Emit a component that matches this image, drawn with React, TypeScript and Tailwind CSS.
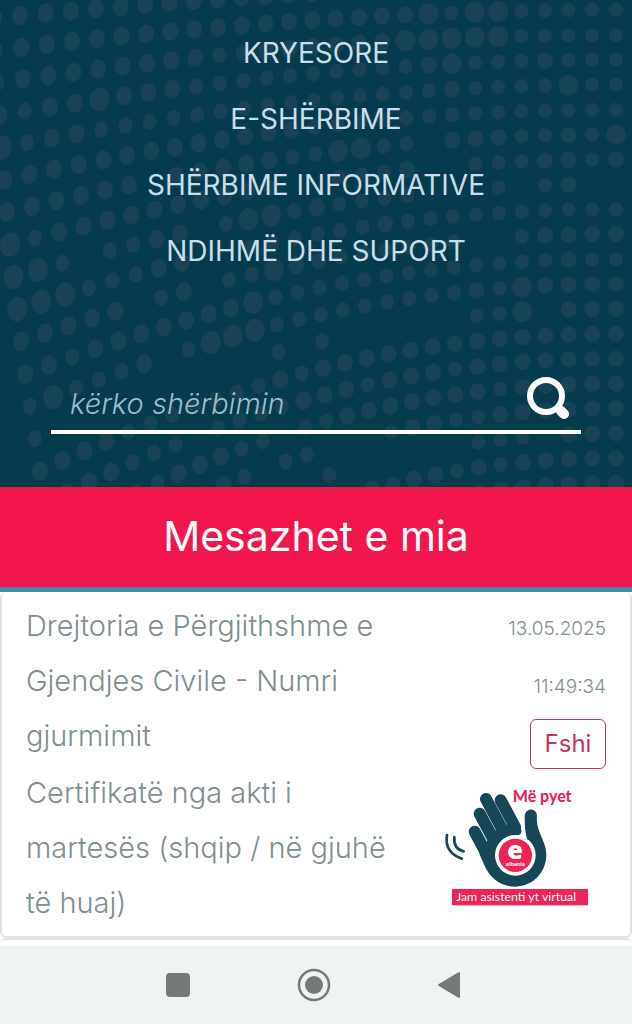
const navItems = ["KRYESORE", "E-SHËRBIME", "SHËRBIME INFORMATIVE", "NDIHMË DHE SUPORT"];

// One string per dot row, one digit per column: 0 = no dot, 1-3 = dot size
const dotRows = [
  "222222222222222222222222222",
  "122222222222222222313311111",
  "122222222112222223333311111",
  "212232221111111111231112111",
  "312211111111111111121111311",
  "222222222222211111111111111",
  "222222022222113311022211213",
  "312222222221001112001112212",
  "331011220133121111000101200",
  "333111220011111121111111111",
  "222220120113211111110012222",
  "221222222231111111111111211",
  "131112013331111111112132222",
  "100000000001010000001130222",
  "222211111112122222222222222",
  "222211101111222122212222222",
  "110111222110112222222122222",
  "022110112101100012211222222",
  "011001100110010000001110222",
  "000000000000012212212122222",
  "000000000000000222222222222",
];

const radii = [0, 7, 8, 10];

function dotAt(row: number, col: number) {
  const u = col / 25;
  const bend = (1 - u) * (1 - u);
  const left = 15.5 + 31.8 * row;
  const right = 10 + 24.9 * (row - 1);
  const shift = 1.2 * row + 0.13 * row * row;
  return {
    x: 20 + 23.84 * col + 50 * u * (1 - u) * (0.95 - u) + shift * bend,
    y: right + (left - right) * bend,
    stretch: 1 + 0.22 * (1 - u),
  };
}

function DotPattern() {
  return (
    <svg
      className="absolute inset-0 w-full h-full"
      viewBox="0 0 632 487"
      preserveAspectRatio="xMidYMid slice"
      fill="#174354"
      aria-hidden="true"
    >
      {dotRows.map((row, r) =>
        row.split("").map((size, c) => {
          if (size === "0") return null;
          const { x, y, stretch } = dotAt(r, c - 1);
          const rad = radii[Number(size)];
          return (
            <ellipse
              key={`${r}-${c}`}
              cx={x}
              cy={y}
              rx={rad}
              ry={rad * stretch}
              transform={`rotate(8 ${x} ${y})`}
            />
          );
        })
      )}
    </svg>
  );
}

function Assistant() {
  return (
    <svg className="w-full" viewBox="0 0 540 405" role="img" aria-label="Më pyet - Jam asistenti yt virtual">
      {/* Fingers */}
      <g stroke="#174756" strokeWidth="36" strokeLinecap="round">
        <path d="M134 155 L186 252" />
        <path d="M149 101 L207 209" />
        <path d="M168 57 L233 178" />
        <path d="M212 61 L255 141" />
      </g>
      {/* Palm and thumb */}
      <path
        d="M148 222 L163 255 C180 295 212 320 257 320 C310 318 349 278 349 223 C349 185 315 150 321 108 C320 82 287 82 284 108 C284 135 285 155 291 178 L256 226 L256 167 Q279 166 273 148 L262 130 L229 134 L195 152 L169 186 Z"
        fill="#174756"
      />
      <circle cx="256" cy="226" r="61" fill="#fff" />
      <circle cx="256" cy="226" r="50" fill="#ee2455" />
      <text x="255" y="236" textAnchor="middle" fill="#fff" className="font-['Open_Sans'] font-extrabold text-[76px]">e</text>
      <text x="256" y="259" textAnchor="middle" fill="#fff" className="font-['Lato'] font-bold text-[18px]">albania</text>
      {/* Wave marks */}
      <g stroke="#174756" strokeWidth="8" strokeLinecap="round" fill="none">
        <path d="M51 165 Q42 217 96 236" />
        <path d="M73 171 Q70 207 101 214" />
      </g>
      <text x="248" y="66" fill="#e42a62" className="font-['Lato'] font-black text-[48px]">Më pyet</text>
      <rect x="66" y="327" width="408" height="49" fill="#ee2455" />
      <text x="78" y="363" fill="#fff" className="font-['Lato'] text-[37px]">Jam asistenti yt virtual</text>
    </svg>
  );
}

export default function App() {
  return (
    <div className="relative min-h-screen flex flex-col bg-white font-['Inter',sans-serif]">
      <header className="relative bg-[#053c4d]">
        <DotPattern />
        <div className="relative pt-5 pb-[53px]">
          <nav className="flex flex-col items-center">
            {navItems.map((item) => (
              <a key={item} href="#" className="text-[28px] leading-[66px] text-[#c8dfeb]">
                {item}
              </a>
            ))}
          </nav>
          {/* Search */}
          <form className="mt-[82px] mx-[51px] h-[68px] flex items-center justify-between border-b-4 border-white">
            <input
              type="text"
              aria-label="kërko shërbimin"
              placeholder="kërko shërbimin"
              className="min-w-0 flex-1 pl-[19px] pt-3 bg-transparent text-[29px] font-light italic text-white placeholder:text-[#9fbdcb] outline-none"
            />
            <button type="button" aria-label="kërko" className="w-12 h-12 mr-2 mt-1">
              <svg viewBox="0 0 48 48" fill="none" stroke="#fff">
                <circle cx="21" cy="20" r="16" strokeWidth="6" />
                <path d="M33 32 L35 34" strokeWidth="7" />
                <path d="M36 35 L39 38" strokeWidth="10" strokeLinecap="round" />
              </svg>
            </button>
          </form>
        </div>
      </header>

      <h1 className="h-[100px] flex items-center justify-center bg-[#f1174d] text-[41px] text-white">
        Mesazhet e mia
      </h1>

      <main className="flex-1 border-t-[5px] border-[#4489a8]">
        <article className="flex justify-between rounded-md border-x-2 border-b-2 border-[#e0e2e3] px-6 pt-[6px] pb-[6px] text-[#7f8f8f]">
          <div className="w-[364px] flex flex-col gap-[2px] text-[29px] font-light leading-[55px]">
            <p>Drejtoria e Përgjithshme e Gjendjes Civile - Numri gjurmimit</p>
            <p>Certifikatë nga akti i martesës (shqip / në gjuhë të huaj)</p>
          </div>
          <div className="flex flex-col items-end pt-[2px] text-[19px] font-light leading-[58px]">
            <time>13.05.2025</time>
            <time>11:49:34</time>
            <button
              type="button"
              className="mt-[3px] h-[50px] w-[76px] rounded-md border border-[#c8315f] text-2xl font-normal leading-none text-[#c8315f]"
            >
              Fshi
            </button>
          </div>
        </article>
        <div className="h-2 rounded-t-md border-t-2 border-[#e0e2e3]" />
      </main>

      <div className="absolute right-[22px] bottom-[109px] w-[180px]">
        <Assistant />
      </div>

      {/* System navigation */}
      <footer className="h-[78px] flex items-center justify-center gap-[100px] pr-1 bg-[#eff3f4]">
        <button type="button" aria-label="Recent apps" className="w-9 h-9">
          <svg viewBox="0 0 36 36" fill="#757978">
            <rect x="6" y="6" width="24" height="24" rx="4" />
          </svg>
        </button>
        <button type="button" aria-label="Home" className="w-9 h-9">
          <svg viewBox="0 0 36 36">
            <circle cx="18" cy="18" r="15" fill="none" stroke="#757978" strokeWidth="2.5" />
            <circle cx="18" cy="18" r="9" fill="#757978" />
          </svg>
        </button>
        <button type="button" aria-label="Back" className="w-9 h-9">
          <svg viewBox="0 0 36 36" fill="#757978" stroke="#757978" strokeWidth="2" strokeLinejoin="round">
            <path d="M7 18 L27 6 L27 30 Z" />
          </svg>
        </button>
      </footer>
    </div>
  );
}
